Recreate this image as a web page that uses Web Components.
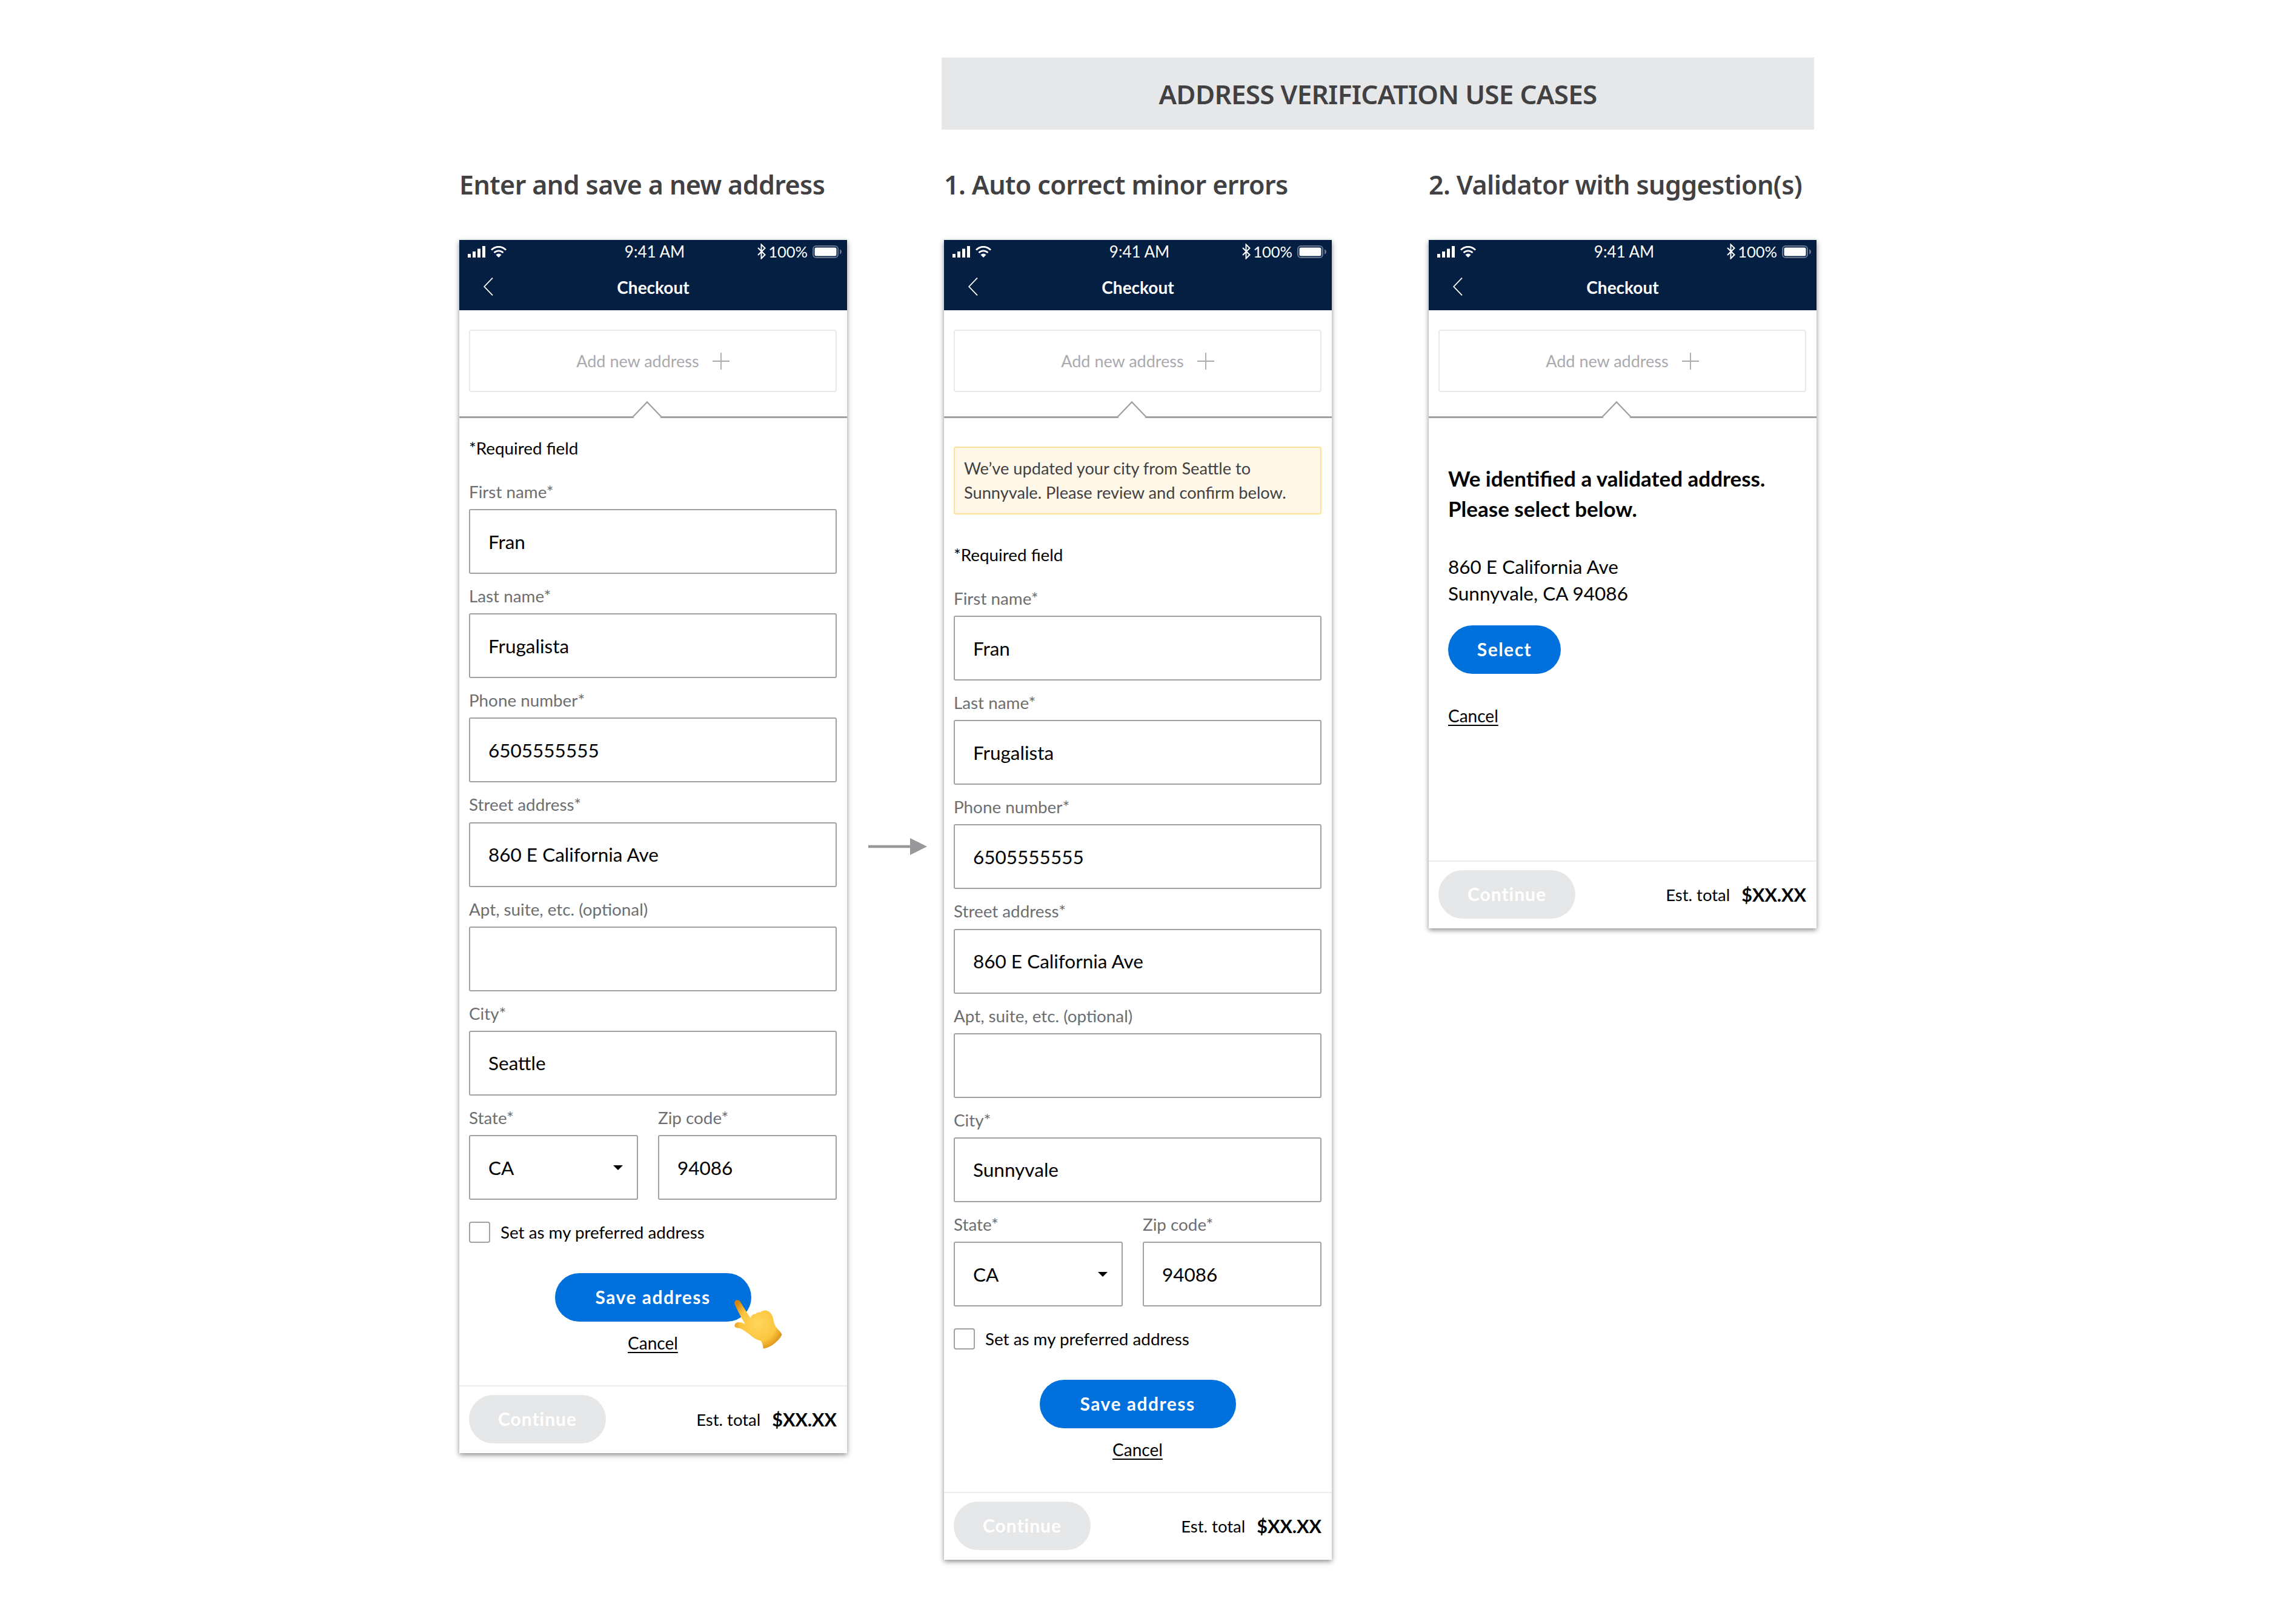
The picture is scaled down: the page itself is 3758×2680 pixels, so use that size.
<!DOCTYPE html>
<html lang="en"><head><meta charset="utf-8"><title>Address verification use cases</title>
<style>
html,body{margin:0;background:#fff}
body{font-family:Lato,"Liberation Sans",sans-serif;color:#000}
</style></head><body>
<x-board>
  <x-banner>ADDRESS VERIFICATION USE CASES</x-banner>
  <x-heading slot="h1">Enter and save a new address</x-heading>
  <x-heading slot="h2">1. Auto correct minor errors</x-heading>
  <x-heading slot="h3">2. Validator with suggestion(s)</x-heading>
  <x-phone slot="p1"><x-address-form city="Seattle" hand></x-address-form></x-phone>
  <x-phone slot="p2"><x-address-form city="Sunnyvale"><x-alert>We’ve updated your city from Seattle to<br>Sunnyvale. Please review and confirm below.</x-alert></x-address-form></x-phone>
  <x-phone slot="p3"><x-suggestion></x-suggestion></x-phone>
</x-board>
<script>
function comp(name, css, html){
  customElements.define(name, class extends HTMLElement{
    connectedCallback(){
      if(this.shadowRoot) return;
      const r=this.attachShadow({mode:'open'});
      r.innerHTML='<style>'+css+'</style>'+(typeof html==='function'?html(this):html);
    }
  });
}
comp('x-board',`
:host{display:block;position:relative;width:3758px;height:2680px;box-sizing:border-box;padding:95px 0 0 758px}
.g{display:grid;grid-template-columns:640px 640px 640px;column-gap:160px;align-items:start}
.b{grid-column:2/4;margin:0 4px 0 -4px}
.h{height:182px}
svg{position:absolute;left:1433px;top:1383px}
`,`<div class="g"><div class="b"><slot></slot></div>
<div class="h"><slot name="h1"></slot></div><div class="h"><slot name="h2"></slot></div><div class="h"><slot name="h3"></slot></div>
<slot name="p1"></slot><slot name="p2"></slot><slot name="p3"></slot></div>
<svg width="97" height="28" viewBox="0 0 97 28"><path d="M0 14H70" stroke="#98989a" stroke-width="4.500"/><path d="M69 0L97 14L69 28Z" fill="#98989a"/></svg>`);
comp('x-banner',`:host{display:flex;height:119px;align-items:center;justify-content:center;background:#e6e7e8;color:#414042;font:600 44px "Noto Sans",Lato,sans-serif;letter-spacing:-.7px}`,`<slot></slot>`);
comp('x-heading',`:host{display:block;color:#414042;font:600 43px/60px "Noto Sans",Lato,sans-serif;letter-spacing:-.6px;padding-top:61px;white-space:nowrap}`,`<slot></slot>`);
comp('x-phone',`:host{display:flex;flex-direction:column;background:#fff;box-shadow:0 3px 8px rgba(0,0,0,.45);width:640px}`,
`<x-appbar></x-appbar><x-add-address></x-add-address><x-divider></x-divider><slot></slot>`);
comp('x-appbar',`
:host{display:block;background:#041f41;color:#fff;height:116px}
.s{height:38px;display:grid;grid-template-columns:1fr auto 1fr;align-items:center;padding:0 9px 0 14px;font-size:26px}
.l,.r{display:flex;align-items:center}
.l{gap:9px}.r{justify-content:flex-end}
.pc{font-size:25.500px;margin:0 8px 0 4px;font-weight:400}
.n{height:78px;display:grid;grid-template-columns:1fr auto 1fr;align-items:center;padding:0 40px;font-size:28px;font-weight:700}
.t{padding-top:2px}
svg{display:block}
`,`<div class="s"><div class="l">
<svg width="29" height="19" viewBox="0 0 29 19" fill="#fff"><rect x="0" y="13" width="5" height="6"/><rect x="8" y="9" width="5" height="10"/><rect x="16" y="4.500" width="5" height="14.500"/><rect x="24" y="0" width="5" height="19"/></svg>
<svg width="26" height="19" viewBox="0 0 26 19" fill="none" stroke="#fff" stroke-width="2.800"><path d="M1 6.500C8 -.5 18 -.5 25 6.500"/><path d="M5.500 11C10 6.800 16 6.800 20.500 11"/><path d="M13 19L8.500 14.500C11 12.300 15 12.300 17.500 14.500Z" fill="#fff" stroke="none"/></svg>
</div><div>9:41 AM</div><div class="r">
<svg width="14" height="26" viewBox="0 0 14 26" fill="none" stroke="#fff" stroke-width="2"><path d="M1 7L12.500 18.500L6.500 24.500V1.500L12.500 7.500L1 19"/></svg>
<span class="pc">100%</span>
<svg width="48" height="21" viewBox="0 0 48 21"><rect x="1" y="1" width="41" height="19" rx="5" fill="none" stroke="#66778f" stroke-width="2"/><rect x="3.500" y="3.500" width="36" height="14" rx="2.500" fill="#fff"/><path d="M45 6.500C47 7 48 8.500 48 10.500S47 14 45 14.500Z" fill="#66778f"/></svg>
</div></div>
<div class="n"><svg width="16" height="30" viewBox="0 0 16 30" fill="none" stroke="#fff" stroke-width="1.800"><path d="M15 .700L1.200 15L15 29.300"/></svg><div class="t">Checkout</div><div></div></div>`);
comp('x-add-address',`
:host{display:block;padding:32px 17px 0 16px}
.b{height:103px;box-sizing:border-box;border:2px solid #e9e9ea;border-radius:4px;display:flex;align-items:center;justify-content:center;gap:22px;color:#a9aaad;font-size:27px;font-weight:400}
svg{display:block}`,`<div class="b">Add new address<svg width="28" height="28" viewBox="0 0 28 28" stroke="#a9aaad" stroke-width="1.800"><path d="M0 14H28M14 0V28"/></svg></div>`);
comp('x-divider',`
:host{display:block;height:43px;box-sizing:border-box;border-bottom:3px solid #a0a1a5;position:relative}
svg{position:absolute;left:285px;bottom:-3px}`,`<svg width="50" height="28" viewBox="0 0 50 28"><path d="M1 26.500L25 1.500L49 26.500" fill="#fff" stroke="#a0a1a5" stroke-width="2.400"/><path d="M3 25.500H47V28H3Z" fill="#fff"/></svg>`);
comp('x-field',`
:host{display:block}
label{display:block;height:40px;line-height:40px;padding-top:17px;margin-bottom:8.170px;color:#6d6e71;font-size:27.800px;white-space:nowrap}
.i{height:107px;box-sizing:border-box;border:2.500px solid #a0a1a5;border-radius:3px;display:flex;align-items:center;justify-content:space-between;padding:0 23px 0 30px;font-size:31.500px;color:#000}
.i svg{display:block}
`,el=>`<label>${el.getAttribute('label')}</label><div class="i"><span>${el.getAttribute('value')||''}</span>${el.hasAttribute('select')?'<svg width="16" height="8" viewBox="0 0 16 8"><path d="M0 0H16L8 8Z" fill="#000"/></svg>':''}</div>`);
comp('x-alert',`
:host{display:block;margin:47px 0 47px;padding:14px 15px;background:#fff8e8;border:2px solid #ffe195;border-radius:4px;color:#414042;font-size:27.200px;line-height:40px}`,`<slot></slot>`);
comp('x-pill',`
:host{display:inline-flex;align-items:center;justify-content:center;box-sizing:border-box;height:80px;padding-bottom:2px;border-radius:40px;background:#0071dc;color:#fff;font-size:30px;font-weight:700;letter-spacing:1.500px}
:host([off]){background:#e6e7e8;letter-spacing:1px}`,`<slot></slot>`);
comp('x-link',`:host{display:block;font-size:28px;line-height:40px;color:#000;text-decoration:underline;text-underline-offset:4px}`,`<slot></slot>`);
comp('x-checkout-footer',`
:host{display:flex;height:112px;box-sizing:border-box;border-top:2px solid #ececed;padding:14px 17px 16px 16px;align-items:center;justify-content:space-between}
x-pill{width:226px}
.r{display:flex;align-items:center;gap:19px;font-size:27.500px}
b{font-size:30.500px;font-weight:700}`,`<x-pill off>Continue</x-pill><div class="r"><span>Est. total</span><b>$XX.XX</b></div>`);
comp('x-address-form',`
:host{display:block}
.f{padding:0 17px 0 16px}
.req{margin-top:30px;margin-bottom:15px;height:40px;line-height:40px;font-size:27.800px;color:#000}
.row{display:grid;grid-template-columns:279px 1fr;column-gap:33px}
.c{display:flex;align-items:center;gap:17px;margin-top:36px;height:35px;font-size:27.800px}
.c i{display:block;width:35px;height:35px;box-sizing:border-box;border:2.500px solid #a0a1a5;border-radius:4px}
.a{margin-top:50px;display:flex;flex-direction:column;align-items:center;gap:15px;padding-bottom:50px;position:relative}
.a x-pill{width:324px}
x-hand{position:absolute;left:438px;top:44px}
`,el=>`<div class="f"><slot></slot><div class="req">*Required field</div>
<x-field label="First name*" value="Fran"></x-field>
<x-field label="Last name*" value="Frugalista"></x-field>
<x-field label="Phone number*" value="6505555555"></x-field>
<x-field label="Street address*" value="860 E California Ave"></x-field>
<x-field label="Apt, suite, etc. (optional)"></x-field>
<x-field label="City*" value="${el.getAttribute('city')}"></x-field>
<div class="row"><x-field label="State*" value="CA" select></x-field><x-field label="Zip code*" value="94086"></x-field></div>
<div class="c"><i></i><span>Set as my preferred address</span></div>
<div class="a"><x-pill>Save address</x-pill><x-link>Cancel</x-link>${el.hasAttribute('hand')?'<x-hand></x-hand>':''}</div></div><x-checkout-footer></x-checkout-footer>`);
comp('x-suggestion',`
:host{display:block}
.b{padding:74px 0 219px 32px;display:flex;flex-direction:column;align-items:flex-start}
h2{margin:0;font-size:35px;line-height:50px;font-weight:700;color:#000}
p{margin:49px 0 31px;font-size:31.500px;line-height:44px;color:#000}
x-pill{width:186px}
x-link{margin-top:49px}`,`<div class="b"><h2>We identified a validated address.<br>Please select below.</h2><p>860 E California Ave<br>Sunnyvale, CA 94086</p><x-pill>Select</x-pill><x-link>Cancel</x-link></div><x-checkout-footer></x-checkout-footer>`);
comp('x-hand',`:host{display:block;width:80px;height:82px}svg{display:block}`,`<svg width="80" height="82" viewBox="0 0 80 82">
<defs><radialGradient id="g" cx="50%" cy="48%" r="60%"><stop offset="0" stop-color="#ffd65c"/><stop offset=".62" stop-color="#fcc63f"/><stop offset="1" stop-color="#d4850f"/></radialGradient></defs>
<path d="M.6 7.500C-.8 3.500 2 .2 4.500 .2C7 .2 8.800 1.500 10 3.300C15 12 21 22 26.700 30C28 25.500 31 23 34.500 23.500C36.500 21 40 20.500 43 20.500C46 17.500 51 16.800 55 18.500C60 20.500 63 25 64 31C65 36 66 41 68.500 44.500C71.500 49 76 52 78.500 57C78 60 74 65.500 68 70.500C62 76 54 80 47.500 80.500C47.500 75 46 71 43.500 67.500C36 66 30 62 25 57C20.500 54 16 50.500 11.500 48C8 46.500 3.500 46.500 1.300 45C-.6 43 .6 38.800 4.500 37.300C9 36.300 14.500 37.500 18 40.500C12 30 5 18 .6 7.500Z" fill="url(#g)"/></svg>`);
</script>
</body></html>
